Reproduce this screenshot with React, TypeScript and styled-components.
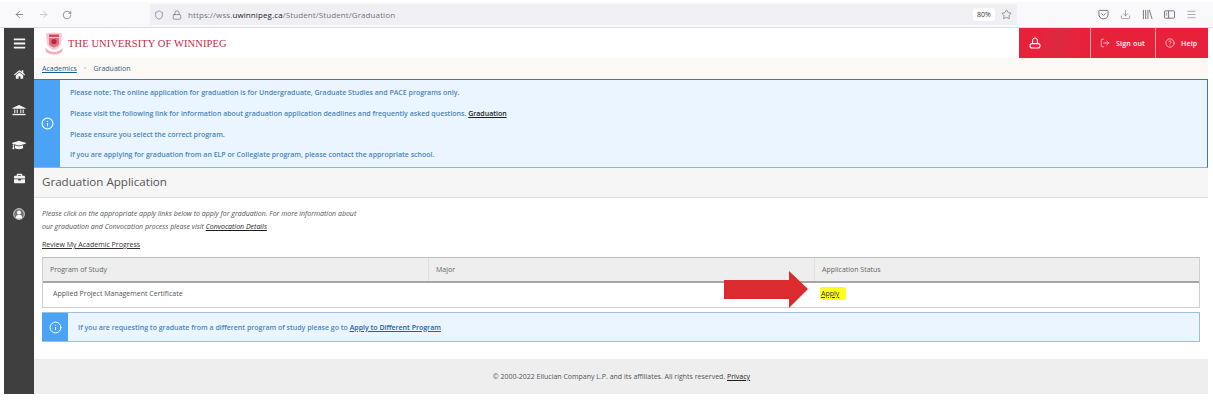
import React from "react";
import styled, { createGlobalStyle } from "styled-components";
import {
  ArrowLeft,
  ArrowRight,
  CircleHelp,
  Download,
  Info,
  Lock,
  LogOut,
  Menu,
  RotateCw,
  Shield,
  Star,
} from "lucide-react";
import { FaBars, FaBriefcase, FaGraduationCap, FaHome } from "react-icons/fa";

const GlobalStyle = createGlobalStyle`
  html, body {
    margin: 0;
    padding: 0;
    background: #fff;
    font-family: "Open Sans", "Liberation Sans", sans-serif;
  }
`;

const Page = styled.div`
  width: 1213px;
  height: 404px;
  overflow: hidden;
  position: relative;
`;

/* Firefox toolbar */
const BrowserBar = styled.div`
  height: 28px;
  box-sizing: border-box;
  display: flex;
  align-items: center;
  background: #f9f9fb;
  border-top: 2px solid #fff;
  border-bottom: 1px solid #dcdcde;
  color: #5b5b66;
  padding-left: 14px;
`;

const NavButtons = styled.div`
  display: flex;
  align-items: center;
  gap: 13px;
  width: 136px;
  flex: none;
`;

const UrlBar = styled.div`
  width: 867px;
  height: 21px;
  flex: none;
  display: flex;
  align-items: center;
  background: #f0f0f4;
  padding-left: 4px;
  box-sizing: border-box;
  gap: 8px;
`;

const UrlText = styled.div`
  flex: 1;
  font-size: 8px;
  letter-spacing: 0.1px;
  color: #73737c;
  white-space: nowrap;
  margin-left: -2px;
  b {
    color: #1c1b22;
    font-weight: 400;
  }
`;

const ZoomBadge = styled.span`
  width: 22px;
  height: 13px;
  background: #fff;
  border-radius: 3px;
  font-size: 7px;
  color: #333;
  display: flex;
  align-items: center;
  justify-content: center;
`;

const StarBox = styled.span`
  width: 22px;
  display: flex;
  justify-content: center;
  margin-left: -8px;
`;

const ToolIcons = styled.div`
  display: flex;
  align-items: center;
  margin-left: 81px;
  gap: 11px;
`;

const ToolIcon = styled.span`
  width: 11px;
  height: 12px;
  display: flex;
  align-items: center;
  justify-content: center;
  color: #6b6b74;
`;

/* Application shell */
const Shell = styled.div`
  width: 1204px;
  height: 366px;
  margin-left: 4px;
  display: flex;
`;

const Sidebar = styled.nav`
  width: 30px;
  flex: none;
  background: #3f3f3f;
  display: flex;
  flex-direction: column;
  align-items: center;
  color: #f4f4f4;
  padding-top: 9px;
  box-sizing: border-box;
`;

const SideItem = styled.div<{ $gap: number }>`
  height: 13px;
  display: flex;
  align-items: center;
  justify-content: center;
  margin-bottom: ${(p) => p.$gap}px;
`;

const Main = styled.div`
  flex: 1;
  min-width: 0;
  display: flex;
  flex-direction: column;
`;

const Header = styled.header`
  height: 30px;
  flex: none;
  display: flex;
  align-items: center;
  padding-left: 10px;
`;

const Brand = styled.div`
  flex: 1;
  display: flex;
  align-items: center;
  gap: 4px;
  font-family: "Liberation Serif", serif;
  font-size: 10.5px;
  letter-spacing: 0.1px;
  color: #c8283f;
`;

const HeaderButton = styled.div<{ $width: number }>`
  width: ${(p) => p.$width}px;
  height: 30px;
  background: #e8213a;
  color: #fff;
  border-left: 1px solid #f4a5ae;
  box-sizing: border-box;
  display: flex;
  align-items: center;
  gap: 6px;
  padding-left: 9px;
  font-size: 7px;
  font-weight: 600;
  letter-spacing: 0.2px;
`;

const UserButton = styled(HeaderButton)`
  border-left: 0;
  padding-left: 10px;
  background: linear-gradient(100deg, #e8213a 20%, #dc2a40 55%, #e8213a 85%);
`;

const Crumbs = styled.div`
  height: 21px;
  flex: none;
  display: flex;
  align-items: center;
  padding-left: 8px;
  background: #fbf8f5;
  font-size: 7px;
  color: #35617f;
`;

const CrumbLink = styled.a`
  color: #1c5c8e;
  text-decoration: underline;
`;

const CrumbDot = styled.span`
  color: #b9c4cc;
  margin: 0 7px;
`;

const Alert = styled.section`
  display: flex;
  background: #ebf5ff;
  border: 1px solid #3a7ca8;
  border-left: 0;
  border-bottom-color: #8fb5d3;
`;

const AlertIcon = styled.div`
  width: 26px;
  flex: none;
  background: #4aa3f5;
  color: #fff;
  display: flex;
  align-items: center;
  justify-content: center;
`;

const TopAlert = styled(Alert)`
  height: 89px;
  flex: none;
  box-sizing: border-box;
`;

const AlertBody = styled.div`
  padding: 8px 0 0 10px;
  display: flex;
  flex-direction: column;
  gap: 10.4px;
`;

const AlertLine = styled.div`
  font-size: 7px;
  line-height: 10.4px;
  font-weight: 600;
  color: #4a86ba;
  white-space: nowrap;
`;

const DarkLink = styled.a`
  color: #1d1d1d;
  text-decoration: underline;
`;

const TitleBar = styled.div`
  height: 30px;
  flex: none;
  box-sizing: border-box;
  background: #f6f6f6;
  border-bottom: 1px solid #dedede;
  display: flex;
  align-items: center;
  padding: 0 0 2px 8px;
  font-size: 11.6px;
  color: #555;
`;

const Content = styled.div`
  flex: 1;
  padding: 9px 8px 0;
  position: relative;
`;

const Intro = styled.p`
  margin: 0;
  font-size: 7px;
  line-height: 13px;
  font-style: italic;
  color: #555;
  white-space: nowrap;
`;

const ProgressLink = styled(DarkLink)`
  display: block;
  font-size: 7px;
  line-height: 10px;
  margin-top: 7px;
  color: #333;
`;

const Table = styled.div`
  margin-top: 7px;
  border: 1px solid #cfcfcf;
  border-top-color: #bdbdbd;
  font-size: 7px;
  color: #666;
`;

const TableRow = styled.div`
  display: grid;
  grid-template-columns: 385px 386px 1fr;
`;

const HeadRow = styled(TableRow)`
  height: 25px;
  background: #eeeeee;
  border-bottom: 2px solid #a6a6a6;
  box-sizing: border-box;
`;

const HeadCell = styled.div`
  display: flex;
  align-items: center;
  padding-left: 7px;
  & + & {
    border-left: 1px solid #e0e0e0;
  }
`;

const BodyRow = styled(TableRow)`
  height: 24px;
  box-sizing: border-box;
  padding-bottom: 3px;
  background: #fff;
`;

const BodyCell = styled.div`
  display: flex;
  align-items: center;
  padding-left: 10px;
  color: #555;
`;

const StatusCell = styled(BodyCell)`
  padding-left: 6px;
`;

const Marked = styled.a`
  background: #ffff1e;
  color: #333;
  text-decoration: underline;
  padding: 2px 7px 2px 1px;
  border-radius: 2px;
`;

const BottomAlert = styled(Alert)`
  margin-top: 4px;
  height: 30px;
  box-sizing: border-box;
  border-color: #9cc0dc;
  border-left: 0;
  align-items: stretch;
`;

const BottomText = styled.div`
  display: flex;
  align-items: center;
  padding-left: 10px;
  font-size: 7px;
  font-weight: 600;
  color: #4a86ba;
  white-space: pre;
`;

const BlueLink = styled.a`
  color: #1c63a5;
  text-decoration: underline;
`;

const ArrowMark = styled.svg`
  position: absolute;
  left: 690px;
  top: 73px;
`;

const Footer = styled.footer`
  height: 35px;
  flex: none;
  background: #eeeeee;
  display: flex;
  align-items: center;
  justify-content: center;
  font-size: 7px;
  color: #555;
  padding: 0 0 0 1px;
  box-sizing: border-box;
`;

function Crest() {
  return (
    <svg width="20" height="23" viewBox="0 0 20 23">
      <path d="M2 1.5 Q10 -0.5 18 1.5 L17 12 Q15 17 10 18 Q5 17 3 12 Z" fill="#f5c9cf" />
      <path d="M5 2.5 H15 V5 H5 Z" fill="#d8485c" />
      <path d="M5 6 H15 V12 Q13.5 15 10 15.5 Q6.5 15 5 12 Z" fill="#e0707f" />
      <circle cx="10" cy="9.5" r="2.6" fill="#b8263c" />
      <path d="M1 16 Q10 24 19 16 L18 20 Q10 25 2 20 Z" fill="#f0aeb8" />
    </svg>
  );
}

function BankIcon() {
  return (
    <svg width="14" height="11" viewBox="0 0 14 11" fill="currentColor">
      <path d="M7 0 L13.5 3 V3.8 H0.5 V3 Z" />
      <path d="M2 4.6 H3.4 V8 H2 Z M4.6 4.6 H6 V8 H4.6 Z M8 4.6 H9.4 V8 H8 Z M10.6 4.6 H12 V8 H10.6 Z" opacity="0.75" />
      <path d="M0.5 8.8 H13.5 V10.2 H0.5 Z" />
    </svg>
  );
}

function PersonBadge() {
  return (
    <svg width="12" height="12" viewBox="0 0 12 12">
      <circle cx="6" cy="6" r="5.4" fill="#777" stroke="#d8d8d8" strokeWidth="0.9" />
      <circle cx="6" cy="4.4" r="2" fill="#fff" />
      <path d="M2.8 10 Q3 6.8 6 6.8 Q9 6.8 9.2 10 Q6 11.6 2.8 10 Z" fill="#fff" />
    </svg>
  );
}

function PocketIcon() {
  return (
    <svg width="11" height="11" viewBox="0 0 12 12" fill="none" stroke="currentColor" strokeWidth="1">
      <path d="M1.5 1.5 H10.5 Q11 1.5 11 2.5 V5.5 Q11 10.5 6 10.8 Q1 10.5 1 5.5 V2.5 Q1 1.5 1.5 1.5 Z" />
      <path d="M3.8 4.8 L6 7 L8.2 4.8" />
    </svg>
  );
}

function LibraryIcon() {
  return (
    <svg width="11" height="11" viewBox="0 0 12 12" fill="none" stroke="currentColor" strokeWidth="1">
      <path d="M1.5 1 V11 M4 1 V11 M6.5 1 V11 M8 1 L11 11" />
    </svg>
  );
}

function SidebarIcon() {
  return (
    <svg width="12" height="11" viewBox="0 0 12 11" fill="none" stroke="currentColor" strokeWidth="1">
      <rect x="0.5" y="1.5" width="11" height="8" rx="1" />
      <path d="M5 1.5 V9.5 M2 4 H3.5 M2 6 H3.5" />
    </svg>
  );
}

function AccountIcon() {
  return (
    <svg width="12" height="12" viewBox="0 0 12 12" fill="none" stroke="currentColor" strokeWidth="1.1">
      <path d="M3.6 6.6 Q3 1 6 1 Q9 1 8.4 6.6" />
      <rect x="1" y="6.6" width="10" height="4.4" rx="2" />
    </svg>
  );
}

export default function App() {
  return (
    <Page>
      <GlobalStyle />
      <BrowserBar>
        <NavButtons>
          <ArrowLeft size={11} strokeWidth={1.5} />
          <ArrowRight size={11} strokeWidth={1.5} color="#b4b4ba" />
          <RotateCw size={10} strokeWidth={1.5} />
        </NavButtons>
        <UrlBar>
          <Shield size={10} strokeWidth={1.4} />
          <Lock size={10} strokeWidth={1.4} />
          <UrlText>
            https://wss.<b>uwinnipeg.ca</b>/Student/Student/Graduation
          </UrlText>
          <ZoomBadge>80%</ZoomBadge>
          <StarBox>
            <Star size={11} strokeWidth={1.3} />
          </StarBox>
        </UrlBar>
        <ToolIcons>
          <ToolIcon><PocketIcon /></ToolIcon>
          <ToolIcon><Download size={11} strokeWidth={1.3} /></ToolIcon>
          <ToolIcon><LibraryIcon /></ToolIcon>
          <ToolIcon><SidebarIcon /></ToolIcon>
          <ToolIcon><Menu size={11} strokeWidth={1.2} /></ToolIcon>
        </ToolIcons>
      </BrowserBar>

      <Shell>
        <Sidebar>
          <SideItem $gap={18}><FaBars size={13} /></SideItem>
          <SideItem $gap={23}><FaHome size={11} /></SideItem>
          <SideItem $gap={21}><BankIcon /></SideItem>
          <SideItem $gap={21}><FaGraduationCap size={14} /></SideItem>
          <SideItem $gap={22}><FaBriefcase size={11} /></SideItem>
          <SideItem $gap={0}><PersonBadge /></SideItem>
        </Sidebar>

        <Main>
          <Header>
            <Brand>
              <Crest />
              THE UNIVERSITY OF WINNIPEG
            </Brand>
            <UserButton $width={71}><AccountIcon /></UserButton>
            <HeaderButton $width={65}><LogOut size={10} strokeWidth={1.5} />Sign out</HeaderButton>
            <HeaderButton $width={53}><CircleHelp size={10} strokeWidth={1.5} />Help</HeaderButton>
          </Header>

          <Crumbs>
            <CrumbLink>Academics</CrumbLink>
            <CrumbDot>•</CrumbDot>
            Graduation
          </Crumbs>

          <TopAlert>
            <AlertIcon><Info size={13} strokeWidth={2} /></AlertIcon>
            <AlertBody>
              <AlertLine>Please note: The online application for graduation is for Undergraduate, Graduate Studies and PACE programs only.</AlertLine>
              <AlertLine>
                Please visit the following link for information about graduation application deadlines and frequently asked questions. <DarkLink>Graduation</DarkLink>
              </AlertLine>
              <AlertLine>Please ensure you select the correct program.</AlertLine>
              <AlertLine>If you are applying for graduation from an ELP or Collegiate program, please contact the appropriate school.</AlertLine>
            </AlertBody>
          </TopAlert>

          <TitleBar>Graduation Application</TitleBar>

          <Content>
            <Intro>
              Please click on the appropriate apply links below to apply for graduation. For more information about
              <br />
              our graduation and Convocation process please visit <DarkLink>Convocation Details</DarkLink>
            </Intro>
            <ProgressLink>Review My Academic Progress</ProgressLink>

            <Table>
              <HeadRow>
                <HeadCell>Program of Study</HeadCell>
                <HeadCell>Major</HeadCell>
                <HeadCell>Application Status</HeadCell>
              </HeadRow>
              <BodyRow>
                <BodyCell>Applied Project Management Certificate</BodyCell>
                <BodyCell />
                <StatusCell><Marked>Apply</Marked></StatusCell>
              </BodyRow>
            </Table>

            <BottomAlert>
              <AlertIcon><Info size={13} strokeWidth={1.8} /></AlertIcon>
              <BottomText>
                If you are requesting to graduate from a different program of study please go to <BlueLink>Apply to Different Program</BlueLink>
              </BottomText>
            </BottomAlert>

            <ArrowMark width="85" height="38" viewBox="0 0 85 38">
              <path d="M0 9 H65 V0 L84 18 L65 37 V28 H0 Z" fill="#dc2b2e" />
            </ArrowMark>
          </Content>

          <Footer>
            © 2000-2022 Ellucian Company L.P. and its affiliates. All rights reserved.&nbsp;<DarkLink>Privacy</DarkLink>
          </Footer>
        </Main>
      </Shell>
    </Page>
  );
}
